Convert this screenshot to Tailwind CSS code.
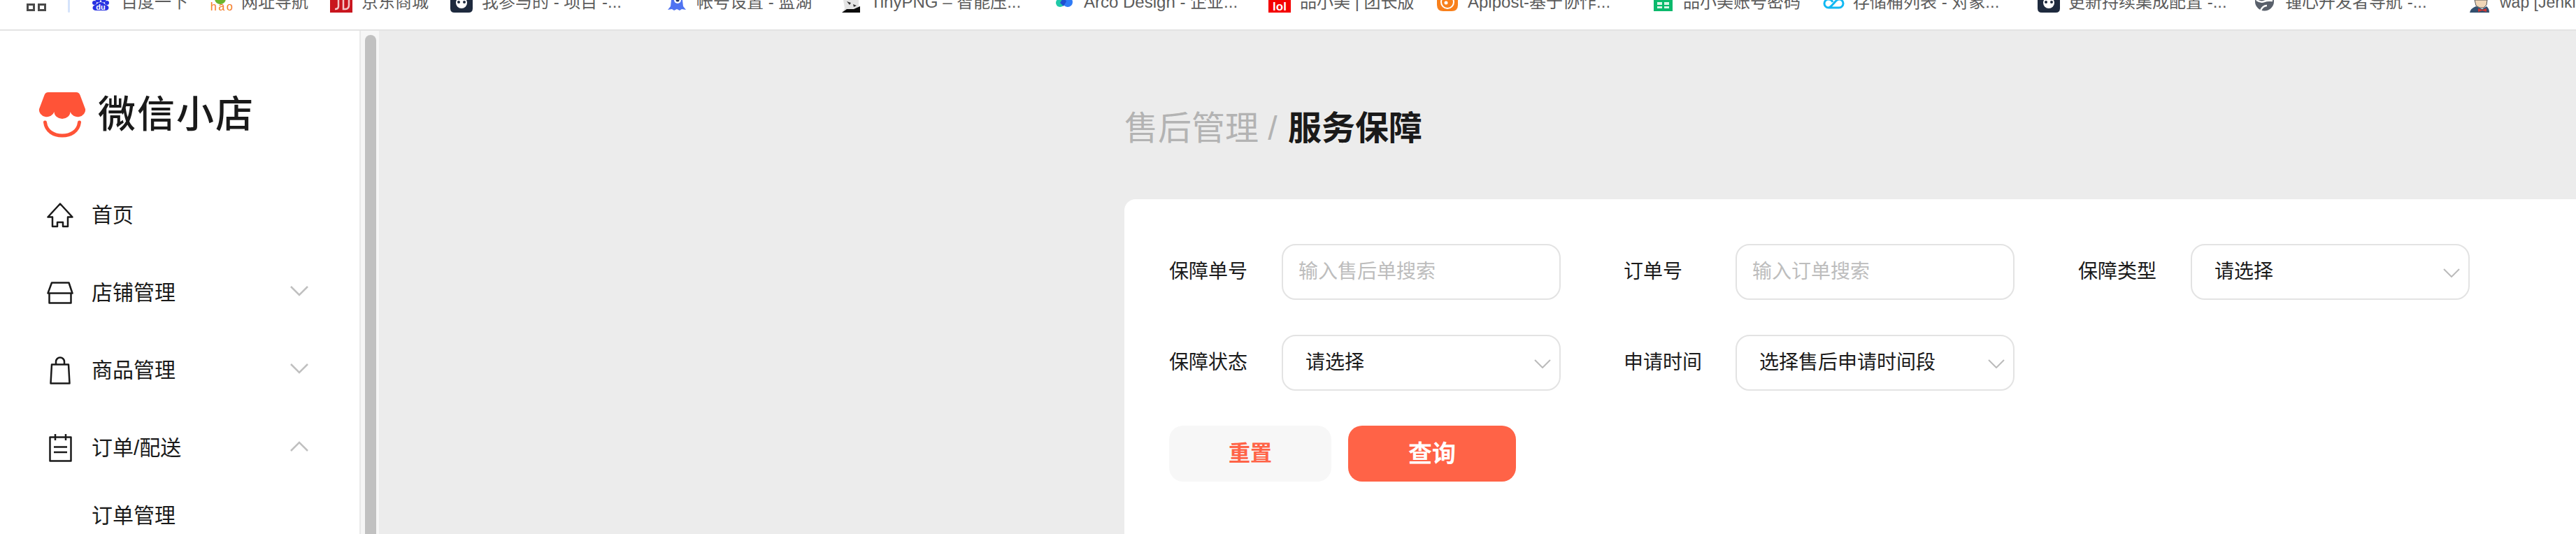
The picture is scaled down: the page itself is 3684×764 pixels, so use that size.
<!DOCTYPE html>
<html lang="zh-CN">
<head>
<meta charset="utf-8">
<title>服务保障</title>
<script src="https://cdn.jsdelivr.net/npm/@tailwindcss/browser@4"></script>
</head>
<body class="m-0 bg-white">
<div class="flex h-[764px] w-[3684px] flex-col overflow-hidden bg-white font-['Liberation_Sans','Noto_Sans_CJK_SC',sans-serif] text-[#1a1a1a]">

  <!-- bookmarks bar -->
  <div class="h-[44px] shrink-0 border-b-2 border-[#e3e3e3] bg-white">
    <div class="flex h-[18px] items-end overflow-hidden whitespace-nowrap pl-[38px] text-[24px] leading-[24px] text-[#5c5c5c]">
      <div class="flex h-full w-[59px] shrink-0 items-start pt-[5px]">
        <div class="flex gap-[4px]"><div class="h-[11px] w-[12px] border-[3px] border-[#4a4a4a]"></div><div class="h-[11px] w-[12px] border-[3px] border-[#4a4a4a]"></div></div>
      </div>
      <div class="h-full w-[34px] shrink-0"><div class="h-full w-[3px] rounded-b bg-[#d5e3fb]"></div></div>

      <div class="flex w-[169px] shrink-0 items-end">
        <svg class="mb-[3px] w-[26px] shrink-0" height="15" viewBox="0 0 26 15"><circle cx="4" cy="4" r="3" fill="#2932e1"/><circle cx="22" cy="4" r="3" fill="#2932e1"/><circle cx="9" cy="0" r="3.500" fill="#2932e1"/><circle cx="17" cy="0" r="3.500" fill="#2932e1"/><path d="M13 3c4 0 5 3 9 4.500 4 2 3 7.500-2 7.500H6c-5 0-6-5.500-2-7.500C8 6 9 3 13 3z" fill="#2932e1"/><text x="13" y="14" font-size="11" font-weight="700" fill="#fff" text-anchor="middle" font-family="Liberation Sans">du</text></svg>
        <span class="mb-[3px] ml-[16px]">百度一下</span>
      </div>
      <div class="flex w-[172px] shrink-0 items-end">
        <svg class="mb-[3px] w-[35px] shrink-0" height="15" viewBox="0 0 35 15"><circle cx="15" cy="-2" r="8" fill="#6cb52d"/><text x="1" y="14.500" font-size="16" fill="#f47b20" textLength="32" font-family="Liberation Sans">hao</text></svg>
        <span class="mb-[3px] ml-[10px]">网址导航</span>
      </div>
      <div class="flex w-[172px] shrink-0 items-end">
        <svg class="w-[32px] shrink-0" height="18" viewBox="0 0 32 18"><rect width="32" height="18" fill="#c9151e"/><path d="M12 0v9q0 4-5 4M19 0v13h3q5 0 5-6V0" fill="none" stroke="#f3c4c6" stroke-width="2.500"/></svg>
        <span class="mb-[3px] ml-[13px]">京东商城</span>
      </div>
      <div class="flex w-[311px] shrink-0 items-end">
        <svg class="w-[32px] shrink-0" height="18" viewBox="0 0 32 18"><path d="M0 0h32v12q0 6-6 6H6q-6 0-6-6z" fill="#1e2a3e"/><circle cx="16" cy="4" r="8" fill="#fff"/><circle cx="12" cy="3" r="2" fill="#1e2a3e"/><circle cx="20" cy="3" r="2" fill="#1e2a3e"/></svg>
        <span class="mb-[3px] ml-[13px]">我参与的 - 项目 -...</span>
      </div>
      <div class="flex w-[248px] shrink-0 items-end">
        <svg class="mb-[3px] w-[26px] shrink-0" height="15" viewBox="0 0 26 15"><path d="M5 0h16l1 9 4 5-6-1-3 2-4-2-4 2-3-2-6 1 4-5z" fill="#4f73f1"/><circle cx="14" cy="0" r="5" fill="#fff"/><circle cx="14" cy="0" r="2.500" fill="#24345f"/></svg>
        <span class="mb-[3px] ml-[15px]">帐号设置 - 蓝湖</span>
      </div>
      <div class="flex w-[307px] shrink-0 items-end">
        <svg class="w-[27px] shrink-0" height="18" viewBox="0 0 27 18"><path d="M3 0h22v8l2 10H1l4-6z" fill="#e4e4e4"/><path d="M8 2l6 2-2 3zM17 6l5 2-4 2z" fill="#333"/><path d="M1 18l7-5 10 0 9-4v9z" fill="#0c0c0c"/></svg>
        <span class="mb-[3px] ml-[15px]">TinyPNG – 智能压...</span>
      </div>
      <div class="flex w-[304px] shrink-0 items-end">
        <svg class="mb-[8px] w-[24px] shrink-0" height="14" viewBox="0 0 24 14"><circle cx="6" cy="8" r="6" fill="#1fc9a8"/><circle cx="17" cy="7" r="7" fill="#2f7bf6"/><path d="M11 0 6 8l5 5 4-7z" fill="#1f4fd0"/></svg>
        <span class="mb-[3px] ml-[16px]">Arco Design - 企业...</span>
      </div>
      <div class="flex w-[241px] shrink-0 items-end">
        <svg class="w-[32px] shrink-0" height="18" viewBox="0 0 32 18"><rect width="32" height="18" fill="#f40000"/><text x="16" y="15" font-size="17" font-weight="700" fill="#fff" text-anchor="middle" font-family="Liberation Sans">lol</text></svg>
        <span class="mb-[3px] ml-[13px]">品小美 | 团长版</span>
      </div>
      <div class="flex w-[310px] shrink-0 items-end">
        <svg class="mb-[2px] w-[30px] shrink-0" height="16" viewBox="0 0 30 16"><path d="M0 0h30v7q0 9-9 9H9q-9 0-9-9z" fill="#f8801c"/><circle cx="15" cy="3" r="9" fill="none" stroke="#fff" stroke-width="2"/><circle cx="13" cy="4" r="2.500" fill="#fff"/></svg>
        <span class="mb-[3px] ml-[14px]">Apipost-基于协作...</span>
      </div>
      <div class="flex w-[241px] shrink-0 items-end">
        <svg class="mb-[2px] w-[27px] shrink-0" height="16" viewBox="0 0 27 16"><rect width="27" height="16" fill="#0bb96c"/><path d="M5 3h7v4H5zM15 3h7v4h-7zM5 9h7v3H5zM15 9h7v3h-7z" fill="#d8f5e6"/></svg>
        <span class="mb-[3px] ml-[15px]">品小美账号密码</span>
      </div>
      <div class="flex w-[308px] shrink-0 items-end">
        <svg class="mb-[5px] w-[32px] shrink-0" height="14" viewBox="0 0 32 14"><path d="M20 2C16 6 12 12 9 12a6 6 0 0 1 0-12c3 0 5 2 6 4M10 12h14a6 6 0 0 0 0-12c-2 0-3 1-4 2" fill="none" stroke="#11b8f2" stroke-width="3"/></svg>
        <span class="mb-[3px] ml-[12px]">存储桶列表 - 对象...</span>
      </div>
      <div class="flex w-[310px] shrink-0 items-end">
        <svg class="w-[32px] shrink-0" height="18" viewBox="0 0 32 18"><path d="M0 0h32v12q0 6-6 6H6q-6 0-6-6z" fill="#1e2a3e"/><circle cx="16" cy="4" r="8" fill="#fff"/><circle cx="12" cy="3" r="2" fill="#1e2a3e"/><circle cx="20" cy="3" r="2" fill="#1e2a3e"/></svg>
        <span class="mb-[3px] ml-[12px]">更新持续集成配置 -...</span>
      </div>
      <div class="flex w-[307px] shrink-0 items-end">
        <svg class="mb-[2px] w-[29px] shrink-0" height="16" viewBox="0 0 29 16"><circle cx="14.500" cy="2" r="13.500" fill="#59606b"/><path d="M3 0q6 4 11 2t12-1M9 15q3-7 9-7" fill="none" stroke="#fff" stroke-width="2.500"/></svg>
        <span class="mb-[3px] ml-[15px]">锺心开发者导航 -...</span>
      </div>
      <div class="flex shrink-0 items-end">
        <svg class="w-[30px] shrink-0" height="18" viewBox="0 0 30 18"><path d="M8 0h18l-1 7-4 4h-6l-5-3z" fill="#f0d6b7" stroke="#555" stroke-width="1"/><path d="M1 18q1-6 9-9l9 4 6-4q4 3 4 9z" fill="#33506e"/><path d="M13 12l6 2 6-2v5l-6-2-6 2z" fill="#d33833"/></svg>
        <span class="mb-[3px] ml-[14px] text-[23px]">wap [Jenkins]</span>
      </div>
    </div>
  </div>

  <div class="flex min-h-0 flex-1">
    <!-- sidebar -->
    <aside class="w-[516px] shrink-0 border-r-2 border-[#e9e9e9] bg-white">
      <div class="flex items-start pl-[55px] pt-[87px]">
        <svg class="shrink-0" width="68" height="66" viewBox="0 0 68 66">
          <path d="M14 1H54Q58 1 59.500 5L67 25A11 10 0 0 1 45.500 29A11.500 10 0 0 1 22.500 29A11 10 0 0 1 1 25L8.500 5Q10 1 14 1Z" fill="#ff5337"/>
          <path d="M9.500 44C11 57 22 63 34 63S57 57 58.500 44" fill="none" stroke="#ff5337" stroke-width="5" stroke-linecap="round"/>
        </svg>
        <span class="ml-[17px] mt-[1px] text-[54px] font-medium leading-[64px] tracking-[2px] text-[#1a1a1a]">微信小店</span>
      </div>
      <nav class="mt-[55px] text-[30px]">
        <a class="flex h-[111px] items-center pl-[67px]">
          <span class="flex w-[38px] justify-center"><svg width="38" height="36" viewBox="0 0 38 36" fill="none" stroke="#1a1a1a" stroke-width="2.500" stroke-linejoin="round"><path d="M19 1.500 1.500 20.500H8V34H15V28H23V34H30V20.500H36.500Z"/></svg></span>
          <span class="ml-[26px]">首页</span>
        </a>
        <a class="flex h-[111px] items-center pl-[67px] pr-[73px]">
          <span class="flex w-[38px] justify-center"><svg width="38" height="32" viewBox="0 0 38 32" fill="none" stroke="#1a1a1a" stroke-width="2.500" stroke-linejoin="round"><path d="M7 1.500H31.500L36.500 16.500H1.500ZM3.500 16.500V30.500H34.500V16.500"/></svg></span>
          <span class="ml-[26px]">店铺管理</span>
          <svg class="mb-[4px] ml-auto" width="26" height="15" viewBox="0 0 26 15" fill="none" stroke="#c0c0c0" stroke-width="2.500"><path d="M1 1 13 13 25 1"/></svg>
        </a>
        <a class="flex h-[111px] items-center pl-[67px] pr-[73px]">
          <span class="flex w-[38px] justify-center"><svg width="30" height="40" viewBox="0 0 30 40" fill="none" stroke="#1a1a1a" stroke-width="2.500" stroke-linejoin="round"><path d="M3 11.500H27L28.500 38.500H1.500ZM9 11.500V7.500A6 6 0 0 1 21 7.500V11.500"/></svg></span>
          <span class="ml-[26px]">商品管理</span>
          <svg class="mb-[4px] ml-auto" width="26" height="15" viewBox="0 0 26 15" fill="none" stroke="#c0c0c0" stroke-width="2.500"><path d="M1 1 13 13 25 1"/></svg>
        </a>
        <a class="flex h-[111px] items-center pl-[67px] pr-[73px]">
          <span class="flex w-[38px] justify-center"><svg width="33" height="40" viewBox="0 0 33 40" fill="none" stroke="#1a1a1a" stroke-width="2.500" stroke-linejoin="round"><path d="M1.500 4.500H31.500V38.500H1.500ZM9 0V9M24 0V9M7 18.500H26M7 26H26"/></svg></span>
          <span class="ml-[26px]">订单/配送</span>
          <svg class="mb-[4px] ml-auto" width="26" height="15" viewBox="0 0 26 15" fill="none" stroke="#c0c0c0" stroke-width="2.500"><path d="M1 14 13 2 25 14"/></svg>
        </a>
        <a class="flex h-[82px] items-center pl-[131px]">订单管理</a>
      </nav>
    </aside>

    <!-- scrollbar -->
    <div class="w-[26px] shrink-0 overflow-hidden bg-[#f6f6f6] px-[6px] pt-[6px]">
      <div class="h-[900px] w-[16px] rounded-full bg-[#c1c1c1]"></div>
    </div>

    <!-- main -->
    <main class="flex min-w-0 flex-1 flex-col bg-[#ececec] pl-[1066px] pt-[116px]">
      <h1 class="mb-[77px] h-[48px] whitespace-nowrap text-[48px] leading-[48px] font-normal text-[#b3b3b3]">售后管理 / <span class="ml-[2px] font-bold text-[#1a1a1a]">服务保障</span></h1>
      <section class="flex-1 rounded-tl-[16px] bg-white pl-[64px] pt-[64px] text-[28px]">
        <div class="grid grid-cols-[560px_560px_560px] gap-x-[90px] gap-y-[50px]">
          <div class="flex items-center">
            <label class="w-[161px] shrink-0">保障单号</label>
            <input class="h-[80px] w-[399px] rounded-[20px] border-2 border-[#e3e3e3] bg-white pl-[22px] outline-none placeholder:text-[#bdbdbd]" placeholder="输入售后单搜索">
          </div>
          <div class="flex items-center">
            <label class="w-[160px] shrink-0">订单号</label>
            <input class="h-[80px] w-[399px] rounded-[20px] border-2 border-[#e3e3e3] bg-white pl-[22px] outline-none placeholder:text-[#bdbdbd]" placeholder="输入订单搜索">
          </div>
          <div class="flex items-center">
            <label class="w-[161px] shrink-0">保障类型</label>
            <div class="flex h-[80px] w-[399px] items-center justify-between rounded-[20px] border-2 border-[#e3e3e3] bg-white pl-[32px] pr-[12px]">
              <span>请选择</span>
              <svg class="mt-[3px]" width="24" height="13" viewBox="0 0 24 13" fill="none" stroke="#bbbbbb" stroke-width="2"><path d="M1 1 12 12 23 1"/></svg>
            </div>
          </div>
          <div class="flex items-center">
            <label class="w-[161px] shrink-0">保障状态</label>
            <div class="flex h-[80px] w-[399px] items-center justify-between rounded-[20px] border-2 border-[#e3e3e3] bg-white pl-[32px] pr-[12px]">
              <span>请选择</span>
              <svg class="mt-[3px]" width="24" height="13" viewBox="0 0 24 13" fill="none" stroke="#bbbbbb" stroke-width="2"><path d="M1 1 12 12 23 1"/></svg>
            </div>
          </div>
          <div class="flex items-center">
            <label class="w-[160px] shrink-0">申请时间</label>
            <div class="flex h-[80px] w-[399px] items-center justify-between rounded-[20px] border-2 border-[#e3e3e3] bg-white pl-[32px] pr-[12px]">
              <span>选择售后申请时间段</span>
              <svg class="mt-[3px]" width="24" height="13" viewBox="0 0 24 13" fill="none" stroke="#bbbbbb" stroke-width="2"><path d="M1 1 12 12 23 1"/></svg>
            </div>
          </div>
        </div>
        <div class="mt-[50px] flex gap-[24px]">
          <button class="h-[80px] w-[232px] rounded-[20px] bg-[#f7f7f7] text-[31px] font-bold text-[#ff6347]">重置</button>
          <button class="h-[80px] w-[240px] rounded-[20px] bg-[#ff6347] text-[34px] font-bold text-white">查询</button>
        </div>
      </section>
    </main>
  </div>
</div>
</body>
</html>
